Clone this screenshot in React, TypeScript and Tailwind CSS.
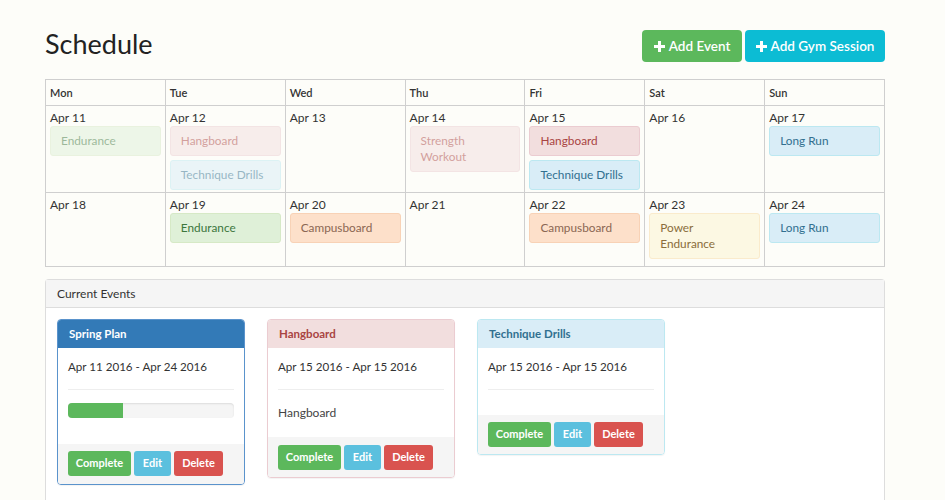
import React from 'react'

type Tone = 'success' | 'danger' | 'info' | 'warning' | 'orange'

type CalEvent = { title: string; tone: Tone; faded?: boolean }

type Day = { label: string; events: CalEvent[] }

const toneClass: Record<Tone, string> = {
  success: 'bg-[#dff0d8] border-[#d6e9c6] text-[#3c763d]',
  danger: 'bg-[#f2dede] border-[#ebccd1] text-[#a94442]',
  info: 'bg-[#d9edf7] border-[#bce8f1] text-[#31708f]',
  warning: 'bg-[#fcf8e3] border-[#faebcc] text-[#8a6d3b]',
  orange: 'bg-[#fde0ca] border-[#f8d2b6] text-[#8b6753]',
}

const weekdays = ['Mon', 'Tue', 'Wed', 'Thu', 'Fri', 'Sat', 'Sun']

const weeks: Day[][] = [
  [
    { label: 'Apr 11', events: [{ title: 'Endurance', tone: 'success', faded: true }] },
    {
      label: 'Apr 12',
      events: [
        { title: 'Hangboard', tone: 'danger', faded: true },
        { title: 'Technique Drills', tone: 'info', faded: true },
      ],
    },
    { label: 'Apr 13', events: [] },
    { label: 'Apr 14', events: [{ title: 'Strength Workout', tone: 'danger', faded: true }] },
    {
      label: 'Apr 15',
      events: [
        { title: 'Hangboard', tone: 'danger' },
        { title: 'Technique Drills', tone: 'info' },
      ],
    },
    { label: 'Apr 16', events: [] },
    { label: 'Apr 17', events: [{ title: 'Long Run', tone: 'info' }] },
  ],
  [
    { label: 'Apr 18', events: [] },
    { label: 'Apr 19', events: [{ title: 'Endurance', tone: 'success' }] },
    { label: 'Apr 20', events: [{ title: 'Campusboard', tone: 'orange' }] },
    { label: 'Apr 21', events: [] },
    { label: 'Apr 22', events: [{ title: 'Campusboard', tone: 'orange' }] },
    { label: 'Apr 23', events: [{ title: 'Power Endurance', tone: 'warning' }] },
    { label: 'Apr 24', events: [{ title: 'Long Run', tone: 'info' }] },
  ],
]

function PlusIcon() {
  return (
    <svg width="11" height="11" viewBox="0 0 11 11" fill="currentColor">
      <rect x="4" y="0" width="3" height="11" />
      <rect x="0" y="4" width="11" height="3" />
    </svg>
  )
}

function CardButtons() {
  return (
    <div className="flex gap-[3px]">
      <button className="h-[25px] w-[63px] rounded-[3px] bg-[#5cb85c] text-[11px] font-bold text-white">
        Complete
      </button>
      <button className="h-[25px] w-[37px] rounded-[3px] bg-[#5bc0de] text-[11px] font-bold text-white">
        Edit
      </button>
      <button className="h-[25px] w-[49px] rounded-[3px] bg-[#d9534f] text-[11px] font-bold text-white">
        Delete
      </button>
    </div>
  )
}

export default function App() {
  return (
    <div
      className="min-h-[500px] bg-[#fdfdf9] text-[#333]"
      style={{ fontFamily: 'Lato, "Open Sans", sans-serif' }}
    >
      <div className="ml-[45px] w-[840px] pt-[30px]">
        <div className="flex items-start justify-between">
          <h1 className="text-[27px] leading-[28px] font-normal text-[#222]">Schedule</h1>
          <div className="flex gap-[3px]">
            <button className="flex h-8 w-[100px] items-center justify-center gap-[4px] rounded-[4px] bg-[#5cb85c] text-[13.5px] font-semibold text-white">
              <PlusIcon />
              Add Event
            </button>
            <button className="flex h-8 w-[140px] items-center justify-center gap-[4px] rounded-[4px] bg-[#0cbcd4] text-[13.5px] font-semibold text-white">
              <PlusIcon />
              Add Gym Session
            </button>
          </div>
        </div>

        <div className="mt-[17px] grid grid-cols-7 border-t border-l border-[#cfcfcf]">
          {weekdays.map((d) => (
            <div
              key={d}
              className="h-[26px] border-r border-b border-[#cfcfcf] px-1 text-[11px] leading-[25px] font-semibold"
            >
              {d}
            </div>
          ))}
          {weeks.map((week, wi) =>
            week.map((day) => (
              <div
                key={day.label}
                className={`border-r border-b border-[#cfcfcf] px-1 pt-1 ${wi === 0 ? 'h-[87px]' : 'h-[74px]'}`}
              >
                <div className="text-[12px] leading-4">{day.label}</div>
                {day.events.map((ev, i) => (
                  <div
                    key={i}
                    className={`mb-1 rounded-[3px] border px-[10px] py-[6px] text-[11.8px] leading-4 ${toneClass[ev.tone]} ${ev.faded ? 'opacity-50' : ''}`}
                  >
                    {ev.title}
                  </div>
                ))}
              </div>
            )),
          )}
        </div>

        <div className="mt-3 rounded-t-[4px] border border-b-0 border-[#dddddd] bg-white">
          <div className="h-[28px] border-b border-[#dddddd] bg-[#f5f5f5] px-[11px] text-[12px] leading-[28px]">
            Current Events
          </div>
          <div className="flex h-[200px] items-start gap-[22px] px-[11px] pt-[11px]">
            <div className="w-[188px] overflow-hidden rounded-[4px] border border-[#5a93cc] shadow-[0_1px_1px_rgba(0,0,0,0.05)]">
              <div className="h-[28px] bg-[#337ab7] px-[11px] text-[11.5px] leading-[28px] font-bold text-white">
                Spring Plan
              </div>
              <div className="bg-white px-[10px] pt-[9px] pb-[10px]">
                <div className="text-[11.6px] leading-5">Apr 11 2016 - Apr 24 2016</div>
                <hr className="mt-3 mb-[13px] border-[#eeeeee]" />
                <div className="mb-[16px] h-[15px] overflow-hidden rounded-[4px] bg-[#f5f5f5] shadow-[inset_0_1px_2px_rgba(0,0,0,0.1)]">
                  <div className="h-full w-[33%] bg-[#5cb85c]" />
                </div>
              </div>
              <div className="bg-[#f5f5f5] px-[10px] pt-[7px] pb-[8px]">
                <CardButtons />
              </div>
            </div>

            <div className="w-[188px] overflow-hidden rounded-[4px] border border-[#ebccd1] shadow-[0_1px_1px_rgba(0,0,0,0.05)]">
              <div className="h-[28px] bg-[#f2dede] px-[11px] text-[11.5px] leading-[28px] font-bold text-[#a94442]">
                Hangboard
              </div>
              <div className="bg-white px-[10px] pt-[9px] pb-[14px]">
                <div className="text-[11.6px] leading-5">Apr 15 2016 - Apr 15 2016</div>
                <hr className="mt-3 mb-[13px] border-[#eeeeee]" />
                <div className="text-[12px] leading-5 text-[#444]">Hangboard</div>
              </div>
              <div className="bg-[#f5f5f5] px-[10px] pt-[8px] pb-[7px]">
                <CardButtons />
              </div>
            </div>

            <div className="w-[188px] overflow-hidden rounded-[4px] border border-[#bce8f1] shadow-[0_1px_1px_rgba(0,0,0,0.05)]">
              <div className="h-[28px] bg-[#d9edf7] px-[11px] text-[11.5px] leading-[28px] font-bold text-[#31708f]">
                Technique Drills
              </div>
              <div className="bg-white px-[10px] pt-[9px] pb-[10px]">
                <div className="text-[11.6px] leading-5">Apr 15 2016 - Apr 15 2016</div>
                <hr className="mt-3 mb-[15px] border-[#eeeeee]" />
              </div>
              <div className="bg-[#f5f5f5] px-[10px] pt-[7px] pb-[7px]">
                <CardButtons />
              </div>
            </div>
          </div>
        </div>
      </div>
    </div>
  )
}
